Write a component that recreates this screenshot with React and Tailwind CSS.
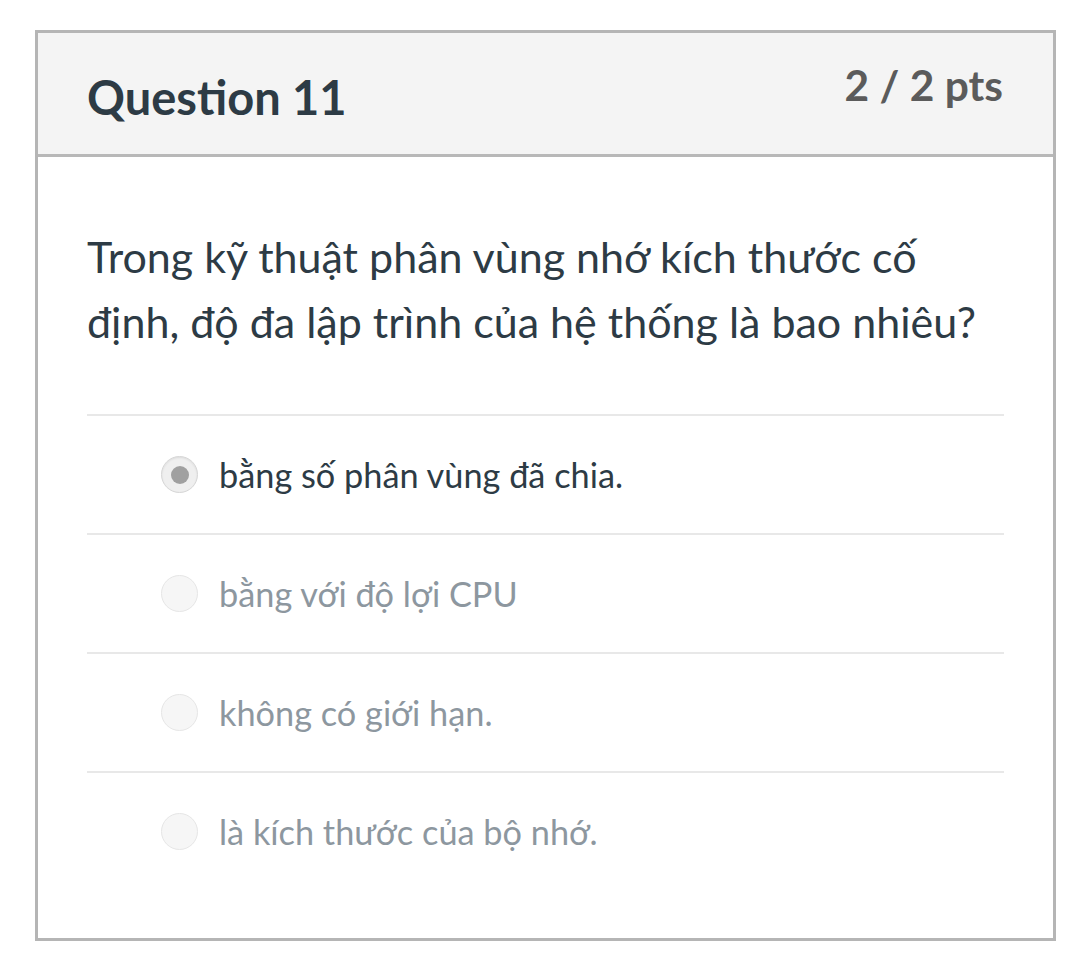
export default function App() {
  const answers = [
    { text: "bằng số phân vùng đã chia.", selected: true },
    { text: "bằng với độ lợi CPU", selected: false },
    { text: "không có giới hạn.", selected: false },
    { text: "là kích thước của bộ nhớ.", selected: false },
  ];
  return (
    <div className="min-h-[969px] w-[1080px] bg-white pt-[30px] pl-[35px]" style={{ fontFamily: "Lato, 'Noto Sans', sans-serif" }}>
      <div className="w-[1021px] h-[911px] border-[3px] border-[#b5b5b5] flex flex-col">
        <div className="h-[124px] bg-[#f4f4f4] border-b-[3px] border-[#b8b8b8] flex justify-between pl-[49px] pr-[50px]">
          <div className="pt-[35px] text-[47px] leading-[58px] font-bold text-[#2d3b45]">Question 11</div>
          <div className="pt-[26px] text-[42.5px] leading-[52px] font-bold text-[#5b5b5b]">2 / 2 pts</div>
        </div>
        <div className="px-[49px] pt-[67px]">
          <div className="text-[43px] leading-[65px] text-[#2d3b45] pb-[60px] max-w-[890px]">
            Trong kỹ thuật phân vùng nhớ kích thước cố định, độ đa lập trình của hệ thống là bao nhiêu?
          </div>
          {answers.map((a, i) => (
            <div key={i} className="border-t-2 border-[#e8e8e8] h-[119px] flex items-center pl-[74px]">
              {a.selected ? (
                <div className="w-[37px] h-[37px] rounded-full border border-[#d6d6d6] bg-[#efefef] flex items-center justify-center shadow-[inset_0_1px_2px_rgba(0,0,0,0.08)]">
                  <div className="w-[18px] h-[18px] rounded-full bg-[#a0a0a0]" />
                </div>
              ) : (
                <div className="w-[37px] h-[37px] rounded-full border border-[#e6e6e6] bg-[#f6f6f6]" />
              )}
              <div className={`ml-[21px] text-[34.3px] leading-[40px] ${a.selected ? "text-[#2d3b45]" : "text-[#8d979f]"}`}>{a.text}</div>
            </div>
          ))}
        </div>
      </div>
    </div>
  );
}
